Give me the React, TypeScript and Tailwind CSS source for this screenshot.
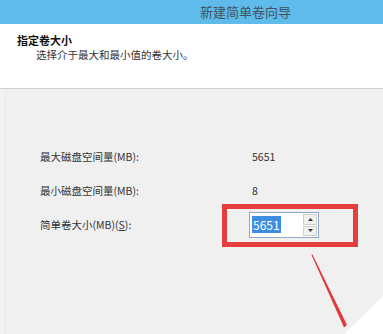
import React from "react";

export default function App() {
  const font = { fontFamily: '"Noto Sans CJK SC", "Noto Sans", sans-serif' };
  return (
    <div className="relative w-[383px] h-[334px] overflow-hidden bg-[#f0f0f0]" style={font}>
      <div className="h-[24px] bg-[#5fbbea] flex items-center pl-[200px] text-[13px] text-[#3f5260]">
        新建简单卷向导
      </div>
      <div className="h-[65px] bg-white border-b border-[#cfcfcf] pl-[17px] pt-[8px]">
        <div className="text-[11px] font-bold text-[#111] leading-[16px]">指定卷大小</div>
        <div className="text-[10.5px] text-[#333] leading-[14px] pl-[19px]">选择介于最大和最小值的卷大小。</div>
      </div>
      <div className="pt-[51px] pl-[40px] text-[10.5px] text-[#333]">
        <div className="flex items-center h-[34px]">
          <div className="w-[212px]">最大磁盘空间量(MB):</div>
          <div>5651</div>
        </div>
        <div className="flex items-center h-[34px]">
          <div className="w-[212px]">最小磁盘空间量(MB):</div>
          <div>8</div>
        </div>
        <div className="flex items-center h-[34px]">
          <div className="w-[209px]">
            简单卷大小(MB)(<span className="underline">S</span>):
          </div>
          <div className="flex w-[70px] h-[26px] border border-[#8fa9c8] bg-white">
            <div className="flex-1 flex items-start pt-[3px] pl-[2px]">
              <span className="bg-[#3d8ee0] text-white text-[12px] leading-[17px] px-[1px]">5651</span>
            </div>
            <div className="w-[15px] flex flex-col gap-[1px] py-[1px] pr-[1px]">
              <div className="flex-1 bg-[#f0f0f0] border border-[#d0d0d0] flex items-center justify-center">
                <svg width="5" height="3" viewBox="0 0 5 3"><path d="M0 3 L2.5 0 L5 3 Z" fill="#333" /></svg>
              </div>
              <div className="flex-1 bg-[#f0f0f0] border border-[#d0d0d0] flex items-center justify-center">
                <svg width="5" height="3" viewBox="0 0 5 3"><path d="M0 0 L2.5 3 L5 0 Z" fill="#333" /></svg>
              </div>
            </div>
          </div>
        </div>
      </div>
      <div className="absolute left-[0px] top-[90px] w-[5px] h-[244px] border-r border-[#ebebeb] bg-[#f3f3f3]" />
      <div className="absolute left-[222px] top-[204px] w-[136px] h-[43px] border-[5px] border-[#e53e3e]" />
      <svg className="absolute left-0 top-0" width="383" height="334" viewBox="0 0 383 334">
        <polygon points="383,296 383,334 344,334" fill="#ffffff" />
        <polygon points="311.5,255 312.5,254.5 347,325 344,327.5" fill="#e03a3a" />
      </svg>
    </div>
  );
}
